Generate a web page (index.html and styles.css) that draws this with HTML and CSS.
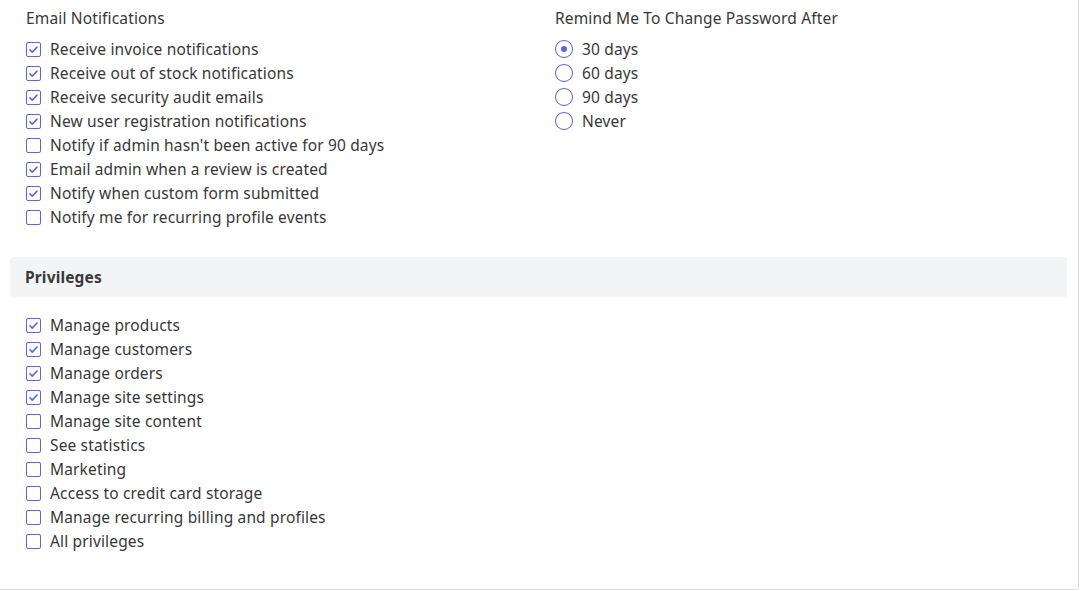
FILE: index.html
```html
<!DOCTYPE html>
<html>
<head>
<meta charset="utf-8">
<link rel="stylesheet" href="styles.css">
</head>
<body>
<div class="card">
  <div class="top">
    <div class="col">
      <div class="heading">Email Notifications</div>
      <ul class="list">
        <li><span class="cb on"><svg viewBox="0 0 16 16"><path d="M3.6 8.3l2.9 2.9L12.4 5"/></svg></span>Receive invoice notifications</li>
        <li><span class="cb on"><svg viewBox="0 0 16 16"><path d="M3.6 8.3l2.9 2.9L12.4 5"/></svg></span>Receive out of stock notifications</li>
        <li><span class="cb on"><svg viewBox="0 0 16 16"><path d="M3.6 8.3l2.9 2.9L12.4 5"/></svg></span>Receive security audit emails</li>
        <li><span class="cb on"><svg viewBox="0 0 16 16"><path d="M3.6 8.3l2.9 2.9L12.4 5"/></svg></span>New user registration notifications</li>
        <li><span class="cb"></span>Notify if admin hasn't been active for 90 days</li>
        <li><span class="cb on"><svg viewBox="0 0 16 16"><path d="M3.6 8.3l2.9 2.9L12.4 5"/></svg></span>Email admin when a review is created</li>
        <li><span class="cb on"><svg viewBox="0 0 16 16"><path d="M3.6 8.3l2.9 2.9L12.4 5"/></svg></span>Notify when custom form submitted</li>
        <li><span class="cb"></span>Notify me for recurring profile events</li>
      </ul>
    </div>
    <div class="col">
      <div class="heading">Remind Me To Change Password After</div>
      <ul class="list">
        <li><span class="rb on"></span>30 days</li>
        <li><span class="rb"></span>60 days</li>
        <li><span class="rb"></span>90 days</li>
        <li><span class="rb"></span>Never</li>
      </ul>
    </div>
  </div>
  <div class="band">Privileges</div>
  <ul class="list priv">
    <li><span class="cb on"><svg viewBox="0 0 16 16"><path d="M3.6 8.3l2.9 2.9L12.4 5"/></svg></span>Manage products</li>
    <li><span class="cb on"><svg viewBox="0 0 16 16"><path d="M3.6 8.3l2.9 2.9L12.4 5"/></svg></span>Manage customers</li>
    <li><span class="cb on"><svg viewBox="0 0 16 16"><path d="M3.6 8.3l2.9 2.9L12.4 5"/></svg></span>Manage orders</li>
    <li><span class="cb on"><svg viewBox="0 0 16 16"><path d="M3.6 8.3l2.9 2.9L12.4 5"/></svg></span>Manage site settings</li>
    <li><span class="cb"></span>Manage site content</li>
    <li><span class="cb"></span>See statistics</li>
    <li><span class="cb"></span>Marketing</li>
    <li><span class="cb"></span>Access to credit card storage</li>
    <li><span class="cb"></span>Manage recurring billing and profiles</li>
    <li><span class="cb"></span>All privileges</li>
  </ul>
</div>
</body>
</html>
```
FILE: styles.css
```css
html, body {
  margin: 0;
  padding: 0;
  background: #ffffff;
}
body {
  font-family: "Noto Sans", "Open Sans", sans-serif;
  font-size: 15.5px;
  letter-spacing: 0.15px;
  color: #383838;
  overflow: hidden;
}
.card {
  box-sizing: border-box;
  width: 1080px;
  height: 591px;
  margin-left: -1px;
  margin-top: -1px;
  border: 1px solid #dedede;
  border-radius: 0 0 4px 0;
  padding: 0 11px 0 10px;
}
.top {
  display: grid;
  grid-template-columns: 529px 1fr;
  padding: 8px 0 0 16px;
  height: 257px;
  box-sizing: border-box;
}
.heading {
  height: 20px;
  line-height: 20px;
  margin-bottom: 9px;
}
.list {
  list-style: none;
  margin: 0;
  padding: 0;
}
.list li {
  display: flex;
  align-items: center;
  height: 24px;
}
.cb {
  box-sizing: border-box;
  width: 15px;
  height: 15px;
  border: 1.6px solid #5865e8;
  border-radius: 2px;
  margin-right: 9px;
  display: flex;
  align-items: center;
  justify-content: center;
}
.cb svg {
  width: 13px;
  height: 13px;
  fill: none;
  stroke: #5865e8;
  stroke-width: 2;
  stroke-linecap: round;
  stroke-linejoin: round;
}
.rb {
  box-sizing: border-box;
  width: 18px;
  height: 18px;
  border: 1.6px solid #5865e8;
  border-radius: 50%;
  margin-right: 9px;
  margin-left: 0;
  display: flex;
  align-items: center;
  justify-content: center;
}
.rb.on::after {
  content: "";
  width: 6px;
  height: 6px;
  border-radius: 50%;
  background: #5865e8;
}
.band {
  background: #f3f4f6;
  border-radius: 3px;
  height: 40px;
  line-height: 40px;
  padding-left: 15px;
  font-weight: 700;
  color: #3a3a3a;
}
.priv {
  padding: 16px 0 0 16px;
}
```
